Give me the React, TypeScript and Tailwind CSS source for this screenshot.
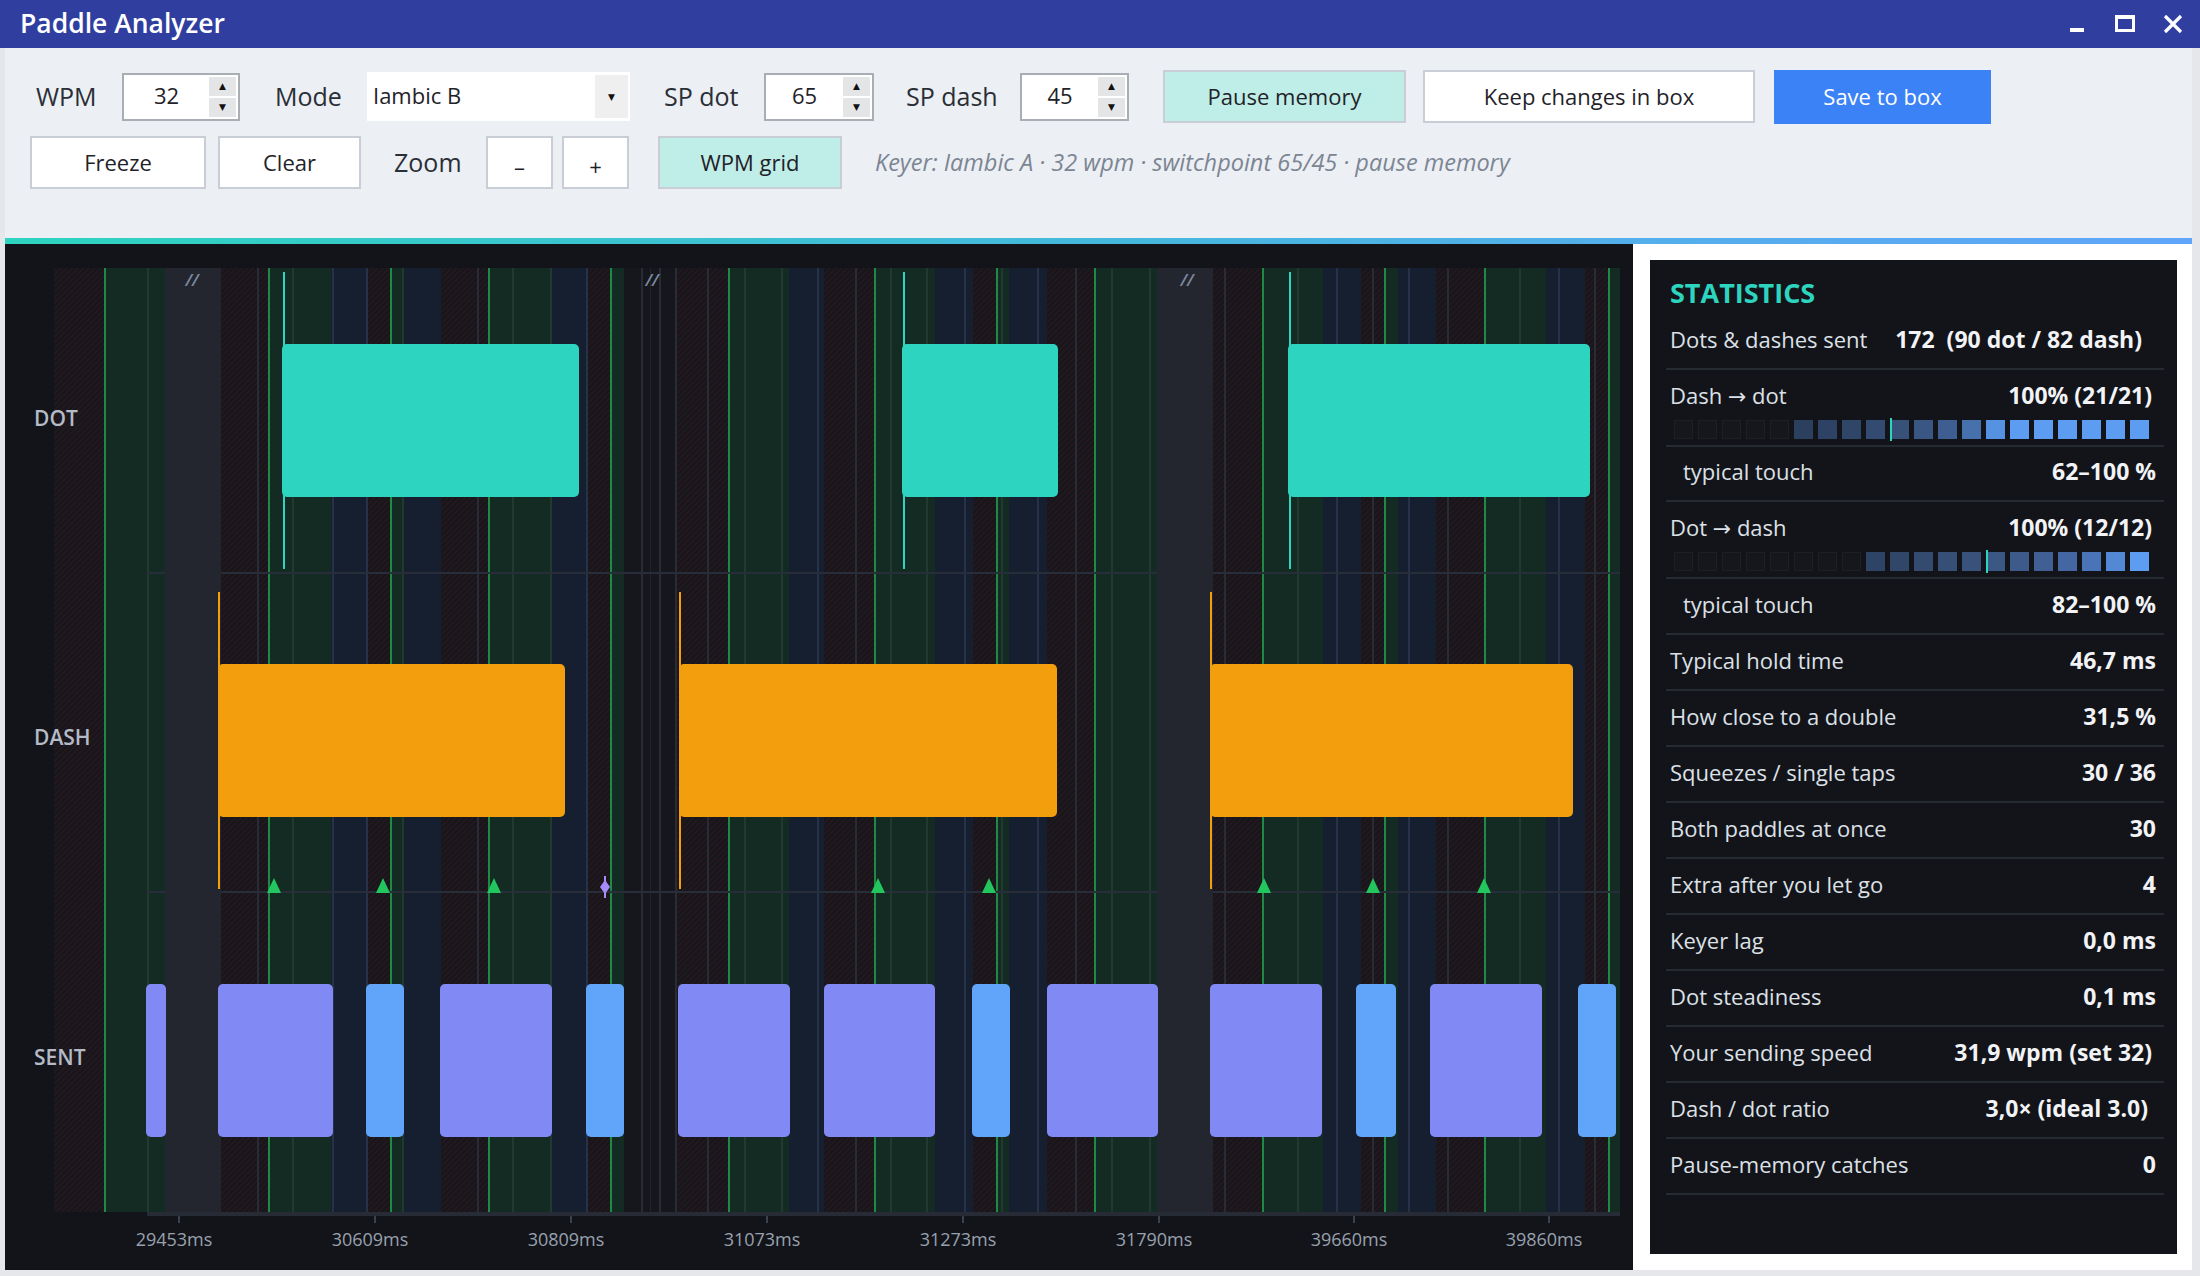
import React from 'react'

const FONT = '"Open Sans", "Noto Sans", "DejaVu Sans", sans-serif'

// plot geometry, in page pixels (the svg viewBox is offset to match the page)
const TOP = 268
const BOT = 1212

const GREEN: [number, number][] = [
  [104, 165], [268, 331], [390, 404], [488, 551], [610, 624], [728, 789], [874, 935],
  [996, 1009], [1094, 1157], [1262, 1323], [1384, 1398], [1484, 1546], [1608, 1620],
]
const NAVY: [number, number][] = [
  [331, 367], [404, 441], [551, 587], [789, 824], [935, 973], [1009, 1047],
  [1323, 1361], [1398, 1436], [1546, 1585],
]
const HATCH_LINES = [257, 477, 641, 659, 675, 707, 855, 1075, 1224, 1372, 1447, 1594]
const GREEN_LINES = [147, 292, 402, 512, 550, 744, 781, 890, 926, 1001, 1111, 1149, 1297, 1519]
const NAVY_LINES = [332, 366, 586, 817, 964, 1037, 1336, 1408, 1558]

const DOTS: [number, number][] = [[282, 579], [902, 1058], [1288, 1590]]
const DASHES: [number, number][] = [[218, 565], [679, 1057], [1210, 1573]]
const SENT: { x: [number, number]; blue?: boolean }[] = [
  { x: [146, 166] }, { x: [218, 333] }, { x: [366, 404], blue: true }, { x: [440, 552] },
  { x: [586, 624], blue: true }, { x: [678, 790] }, { x: [824, 935] }, { x: [972, 1010], blue: true },
  { x: [1047, 1158] }, { x: [1210, 1322] }, { x: [1356, 1396], blue: true }, { x: [1430, 1542] },
  { x: [1578, 1616], blue: true },
]
const TRIANGLES = [274, 383, 494, 878, 989, 1264, 1373, 1484]
const TICKS = [
  [179, '29453ms'], [375, '30609ms'], [571, '30809ms'], [767, '31073ms'],
  [963, '31273ms'], [1159, '31790ms'], [1354, '39660ms'], [1549, '39860ms'],
] as const

const DASH_DOT = [
  '', '', '', '', '',
  '#2b3f5e', '#2d4264', '#304669', '#344b71', '#375179', '#3a5683', '#3e5d90', '#4671ad',
  '#5592e2', '#5c9df2', '#5c9df2', '#5c9df2', '#5c9df2', '#5c9df2', '#5c9df2',
]
const DOT_DASH = [
  '', '', '', '', '', '', '', '',
  '#2e4466', '#314769', '#344b70', '#364f77', '#38527c', '#3b5784', '#3d5a8a', '#405f95',
  '#4466a2', '#4a74b8', '#5288d4', '#5c9df2',
]

type Row = { label: string; value: string; bar?: string[]; marker?: number; indent?: boolean; h?: string; pr?: string }

const ROWS: Row[] = [
  { label: 'Dots & dashes sent', value: '172\u00a0\u00a0(90 dot / 82 dash)', pr: 'pr-[22px]' },
  { label: 'Dash → dot', value: '100% (21/21)', bar: DASH_DOT, marker: 9 },
  { label: 'typical touch', value: '62–100 %', indent: true, h: 'h-[55px]' },
  { label: 'Dot → dash', value: '100% (12/12)', bar: DOT_DASH, marker: 13 },
  { label: 'typical touch', value: '82–100 %', indent: true },
  { label: 'Typical hold time', value: '46,7 ms' },
  { label: 'How close to a double', value: '31,5 %' },
  { label: 'Squeezes / single taps', value: '30 / 36' },
  { label: 'Both paddles at once', value: '30' },
  { label: 'Extra after you let go', value: '4' },
  { label: 'Keyer lag', value: '0,0 ms' },
  { label: 'Dot steadiness', value: '0,1 ms' },
  { label: 'Your sending speed', value: '31,9 wpm (set 32)', pr: 'pr-[12px]' },
  { label: 'Dash / dot ratio', value: '3,0× (ideal 3.0)', pr: 'pr-[16px]' },
  { label: 'Pause-memory catches', value: '0' },
]

function Spin({ value, className }: { value: string; className: string }) {
  return (
    <div className={`flex h-[48px] border-2 border-[#a9adb4] bg-white ${className}`}>
      <div className="flex-1 flex items-center justify-center text-[22px] text-[#1f2329] pb-[3px]">{value}</div>
      <div className="w-[29px] flex flex-col gap-[2px] py-[2px] pr-[2px]">
        <div className="flex-1 bg-[#e4e5e7] flex items-center justify-center text-[9px] text-[#111]">▲</div>
        <div className="flex-1 bg-[#e4e5e7] flex items-center justify-center text-[9px] text-[#111]">▼</div>
      </div>
    </div>
  )
}

function Btn({ children, className }: { children: React.ReactNode; className: string }) {
  return (
    <button className={`h-[53px] border-2 border-[#c9ced6] text-[22px] text-[#1f2329] flex items-center justify-center ${className}`}>
      {children}
    </button>
  )
}

function Timeline() {
  const h = BOT - TOP
  return (
    <svg width={1628} height={1026} viewBox="5 244 1628 1026" className="block" style={{ fontFamily: FONT }}>
      <defs>
        <pattern id="hatch" width="4" height="4" patternUnits="userSpaceOnUse" patternTransform="rotate(45)">
          <rect width="4" height="4" fill="#16161b" />
          <rect width="1.3" height="4" fill="#29181f" />
        </pattern>
      </defs>
      <rect x={5} y={244} width={1628} height={1026} fill="#131419" />
      <rect x={54} y={TOP} width={1566} height={h} fill="url(#hatch)" />

      {/* bands */}
      {GREEN.map(([a, b]) => <rect key={'g' + a} x={a} y={TOP} width={b - a} height={h} fill="#132b22" />)}
      {NAVY.map(([a, b]) => <rect key={'n' + a} x={a} y={TOP} width={b - a} height={h} fill="#151f30" />)}
      <rect x={624} y={TOP} width={52} height={h} fill="#15171c" />
      {HATCH_LINES.map(x => <rect key={'hl' + x} x={x} y={TOP} width={2} height={h} fill="#2a2c35" />)}
      <rect x={650} y={TOP} width={1} height={h} fill="#22242b" />
      {GREEN_LINES.map(x => <rect key={'gl' + x} x={x} y={TOP} width={2} height={h} fill="#21392f" />)}
      {NAVY_LINES.map(x => <rect key={'nl' + x} x={x} y={TOP} width={2} height={h} fill="#26324a" />)}
      {GREEN.map(([a]) => <rect key={'ge' + a} x={a} y={TOP} width={2} height={h} fill="#1e8a44" />)}

      {/* lane dividers */}
      <rect x={147} y={572} width={1473} height={2} fill="#272d39" />
      <rect x={147} y={891} width={1473} height={2} fill="#272d39" />

      {/* break columns */}
      <rect x={165} y={TOP} width={56} height={h + 3} fill="#23262f" />
      <rect x={1157} y={TOP} width={56} height={h + 3} fill="#23262f" />
      {[192, 652, 1187].map(x => (
        <text key={'br' + x} x={x} y={286} textAnchor="middle" fontSize={17} fontStyle="italic" fontWeight={600} fill="#7e8aa0">//</text>
      ))}

      {/* paddle lanes */}
      {DOTS.map(([a]) => <rect key={'dm' + a} x={a + 1} y={272} width={2} height={297} fill="#2dd4bf" />)}
      {DOTS.map(([a, b]) => <rect key={'d' + a} x={a} y={344} width={b - a} height={153} rx={5} fill="#2dd4bf" />)}
      {DASHES.map(([a]) => <rect key={'am' + a} x={a} y={592} width={2} height={297} fill="#f59e0b" />)}
      {DASHES.map(([a, b]) => <rect key={'a' + a} x={a} y={664} width={b - a} height={153} rx={5} fill="#f39e0c" />)}

      {TRIANGLES.map(x => <polygon key={'t' + x} points={`${x - 7},893 ${x},878 ${x + 7},893`} fill="#22c55e" />)}
      <rect x={604} y={876} width={2} height={22} fill="#a78bfa" />
      <polygon points="605,880 610,887 605,894 600,887" fill="#a78bfa" />

      {SENT.map(s => (
        <rect key={'s' + s.x[0]} x={s.x[0]} y={984} width={s.x[1] - s.x[0]} height={153} rx={5} fill={s.blue ? '#60a5fa' : '#8189f4'} />
      ))}

      {/* lane labels */}
      <text x={34} y={426} fontSize={21} fontWeight={600} fill="#b4bbc7">DOT</text>
      <text x={34} y={745} fontSize={21} fontWeight={600} fill="#b4bbc7">DASH</text>
      <text x={34} y={1065} fontSize={21} fontWeight={600} fill="#b4bbc7">SENT</text>

      {/* axis */}
      <rect x={147} y={1212} width={1473} height={4} fill="#262b36" />
      {TICKS.map(([x, label]) => (
        <g key={label}>
          <rect x={x - 1} y={1216} width={2} height={7} fill="#3b414d" />
          <text x={x - 5} y={1246} textAnchor="middle" fontSize={18} fill="#98a1ae">{label}</text>
        </g>
      ))}
    </svg>
  )
}

function Squares({ colors, marker }: { colors: string[]; marker: number }) {
  return (
    <div className="relative flex gap-[5px] mt-[10px] h-[19px]">
      {colors.map((c, i) =>
        c ? (
          <div key={i} className="w-[19px] h-[19px]" style={{ background: c }} />
        ) : (
          <div key={i} className="w-[19px] h-[19px] bg-[#16171c] border border-[#1d1f25]" />
        )
      )}
      <div className="absolute top-[-2px] w-[2px] h-[23px] bg-[#2dd4bf]" style={{ left: marker * 24 }} />
    </div>
  )
}

function Stats() {
  return (
    <div className="w-[527px] h-[994px] bg-[#131419] pl-[16px] pr-[13px]">
      <div className="h-[54px] pt-[17px] pl-[4px] text-[27px] font-bold leading-[32px] text-[#2dd4bf]">STATISTICS</div>
      {ROWS.map((r, i) =>
        r.bar ? (
          <div key={i} className="border-b-2 border-[#262a31] pt-[12px] pb-[6px] pl-[8px] pr-[12px]">
            <div className="flex items-center justify-between h-[28px] -ml-[4px] pb-[2px]">
              <span className="text-[22px] text-[#dce0e7]">{r.label}</span>
              <span className="text-[23px] font-bold text-[#f1f3f6]">{r.value}</span>
            </div>
            <Squares colors={r.bar} marker={r.marker ?? 0} />
          </div>
        ) : (
          <div key={i} className={`flex items-center justify-between border-b-2 border-[#262a31] pb-[4px] ${r.h ?? 'h-[56px]'} ${r.indent ? 'pl-[17px]' : 'pl-[4px]'} ${r.pr ?? 'pr-[8px]'}`}>
            <span className="text-[22px] text-[#dce0e7]">{r.label}</span>
            <span className="text-[23px] font-bold text-[#f1f3f6] whitespace-pre">{r.value}</span>
          </div>
        )
      )}
    </div>
  )
}

export default function App() {
  return (
    <div className="w-[2200px] h-[1276px] overflow-hidden bg-[#e6e7ea] flex flex-col" style={{ fontFamily: FONT }}>
      {/* title bar */}
      <div className="h-[48px] bg-[#303f9f] flex items-center justify-between pl-[20px] pr-[14px]">
        <span className="text-[26.5px] font-semibold text-white leading-none pb-[2px]">Paddle Analyzer</span>
        <svg width="120" height="48" viewBox="2068 0 120 48">
          <rect x={2072} y={28} width={14} height={4} fill="#fff" />
          <rect x={2118.5} y={16.5} width={17} height={14} fill="none" stroke="#fff" strokeWidth={3} />
          <rect x={2117} y={15} width={20} height={4} fill="#fff" />
          <path d="M2167 16 L2183 32 M2183 16 L2167 32" stroke="#fff" strokeWidth={3.2} />
        </svg>
      </div>

      <div className="flex-1 flex flex-col pl-[5px] pr-[8px] pb-[6px]">
        {/* toolbar */}
        <div className="h-[190px] bg-[#eceff4] pt-[22px]">
          <div className="flex items-center h-[53px] pl-[31px] whitespace-nowrap">
            <span className="w-[63px] text-[25px] text-[#2a2e35]">WPM</span>
            <Spin className="ml-[23px] w-[118px]" value="32" />
            <span className="ml-[35px] w-[70px] text-[25px] text-[#2a2e35]">Mode</span>
            <div className="ml-[22px] w-[263px] h-[49px] bg-white flex items-center">
              <span className="flex-1 pl-[6px] text-[22px] text-[#1f2329] pb-[2px]">Iambic B</span>
              <div className="w-[33px] h-[43px] mr-[2px] bg-[#efefef] flex items-center justify-center text-[9px] text-[#111]">▼</div>
            </div>
            <span className="ml-[34px] w-[77px] text-[25px] text-[#2a2e35]">SP dot</span>
            <Spin className="ml-[23px] w-[110px]" value="65" />
            <span className="ml-[32px] w-[91px] text-[25px] text-[#2a2e35]">SP dash</span>
            <Spin className="ml-[23px] w-[109px]" value="45" />
            <Btn className="ml-[34px] w-[243px] bg-[#bfede7]">Pause memory</Btn>
            <Btn className="ml-[17px] w-[332px] bg-white">Keep changes in box</Btn>
            <button className="ml-[19px] w-[217px] h-[54px] bg-[#3b82f6] text-white text-[22px] flex items-center justify-center">Save to box</button>
          </div>
          <div className="flex items-center h-[53px] mt-[13px] pl-[25px] whitespace-nowrap">
            <Btn className="w-[176px] bg-white">Freeze</Btn>
            <Btn className="ml-[12px] w-[143px] bg-white">Clear</Btn>
            <span className="ml-[33px] w-[69px] text-[25px] text-[#2a2e35]">Zoom</span>
            <Btn className="ml-[23px] w-[67px] bg-white pt-[8px]">–</Btn>
            <Btn className="ml-[9px] w-[67px] bg-white pt-[8px]">+</Btn>
            <Btn className="ml-[29px] w-[184px] bg-[#bfede7]">WPM grid</Btn>
            <span className="ml-[33px] text-[23.5px] italic text-[#7c8592]">
              Keyer: Iambic A · 32 wpm · switchpoint 65/45 · pause memory
            </span>
          </div>
        </div>

        <div className="h-[6px] bg-linear-to-r from-[#2dd4bf] via-[#45b8dc] to-[#60a5fa]" />

        {/* chart + stats */}
        <div className="flex-1 flex">
          <Timeline />
          <div className="flex-1 bg-white pl-[17px] pt-[16px]">
            <Stats />
          </div>
        </div>
      </div>
    </div>
  )
}
